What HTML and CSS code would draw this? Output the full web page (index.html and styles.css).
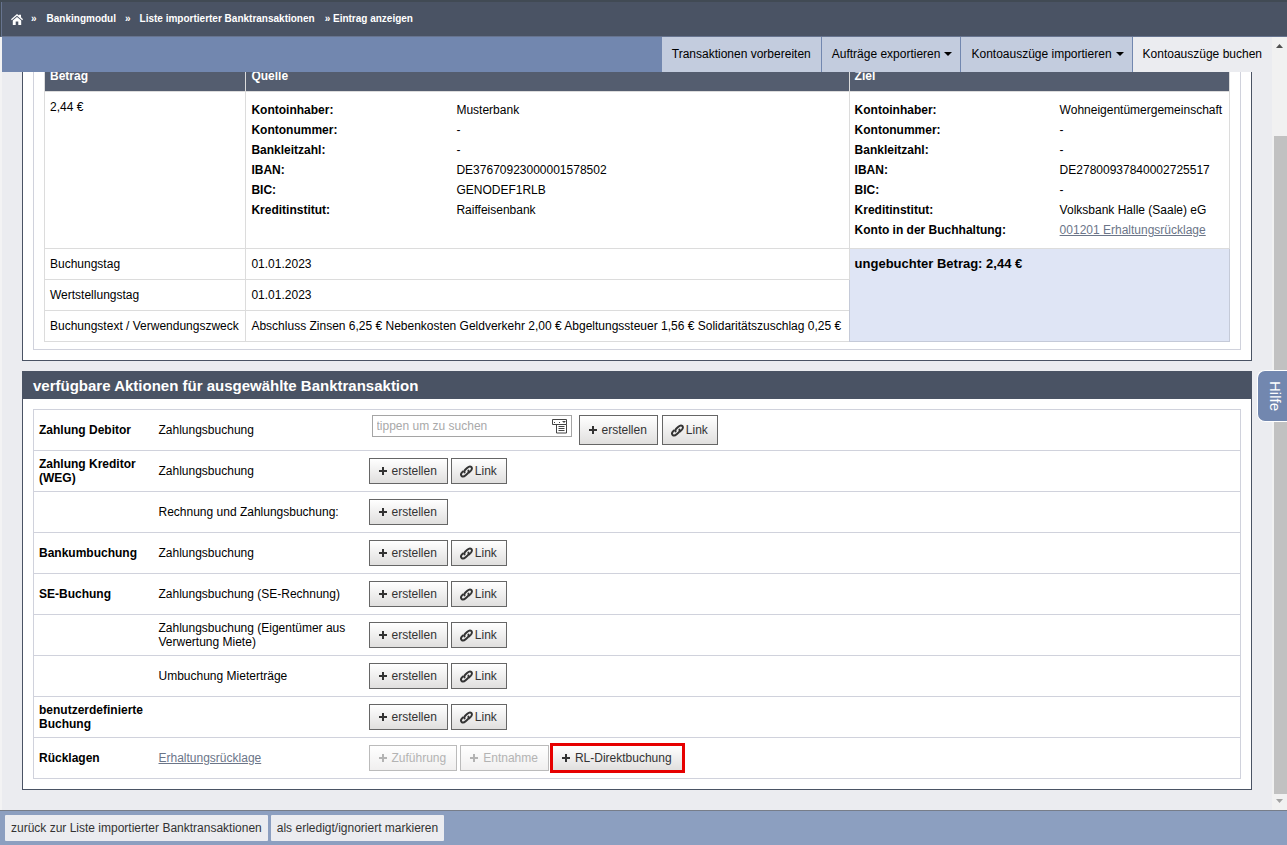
FILE: index.html
```html
<!DOCTYPE html>
<html lang="de">
<head>
<meta charset="utf-8">
<title>Eintrag anzeigen</title>
<link rel="stylesheet" href="styles.css">
</head>
<body>
<svg class="sprite" aria-hidden="true">
  <symbol id="plus" viewBox="0 0 8 8"><path d="M3 0h2v3h3v2H5v3H3V5H0V3h3z" fill="currentColor"/></symbol>
  <symbol id="chain" viewBox="0 0 12 12"><g fill="none" stroke="currentColor" stroke-width="1.800" stroke-linecap="round"><path d="M4.200 6.800C3.800 5.800 4.200 5 5 4.200L6.800 2.500C8 1.400 9.600 1 10.500 1.900C11.400 2.800 11 4.300 9.900 5.400L8.300 6.900"/><path d="M7.800 5.200C8.200 6.200 7.800 7 7 7.800L5.200 9.500C4 10.600 2.400 11 1.500 10.100C.6 9.200 1 7.700 2.100 6.600L2.700 6"/></g></symbol>
</svg>
<header class="topbar">
  <nav class="crumbs" aria-label="Pfad">
    <a class="home" href="#" aria-label="Startseite"><svg width="12" height="11" viewBox="0 0 12 11"><path d="M6 0l2 1.600V.800h2v2.500l2 2-.8.900L6 1.800.8 6.200 0 5.300z M6 2.900l4.200 3.700V11H7.300V7.500H4.700V11H1.800V6.600z" fill="#fff"/></svg></a>
    <span class="sep">»</span><a href="#">Bankingmodul</a>
    <span class="sep">»</span><a href="#">Liste importierter Banktransaktionen</a>
    <span class="last">» Eintrag anzeigen</span>
  </nav>
</header>
<div class="body">
  <div class="page">
    <nav class="tabs">
      <a href="#">Transaktionen vorbereiten</a>
      <a class="drop" href="#">Aufträge exportieren <i class="caret"></i></a>
      <a class="drop" href="#">Kontoauszüge importieren <i class="caret"></i></a>
      <a class="active" href="#">Kontoauszüge buchen</a>
    </nav>
    <main class="content">
      <section class="panel scrolled">
        <div class="box padded">
          <table class="transaction">
            <colgroup><col class="c-amount"><col class="c-source"><col class="c-target"></colgroup>
            <thead><tr><th>Betrag</th><th>Quelle</th><th>Ziel</th></tr></thead>
            <tbody>
              <tr>
                <td>2,44 €</td>
                <td><dl>
                  <dt>Kontoinhaber:</dt><dd>Musterbank</dd>
                  <dt>Kontonummer:</dt><dd>-</dd>
                  <dt>Bankleitzahl:</dt><dd>-</dd>
                  <dt>IBAN:</dt><dd>DE37670923000001578502</dd>
                  <dt>BIC:</dt><dd>GENODEF1RLB</dd>
                  <dt>Kreditinstitut:</dt><dd>Raiffeisenbank</dd>
                </dl></td>
                <td><dl>
                  <dt>Kontoinhaber:</dt><dd>Wohneigentümergemeinschaft</dd>
                  <dt>Kontonummer:</dt><dd>-</dd>
                  <dt>Bankleitzahl:</dt><dd>-</dd>
                  <dt>IBAN:</dt><dd>DE27800937840002725517</dd>
                  <dt>BIC:</dt><dd>-</dd>
                  <dt>Kreditinstitut:</dt><dd>Volksbank Halle (Saale) eG</dd>
                  <dt>Konto in der Buchhaltung:</dt><dd><a class="link" href="#">001201 Erhaltungsrücklage</a></dd>
                </dl></td>
              </tr>
              <tr><td>Buchungstag</td><td>01.01.2023</td><td class="open" rowspan="3">ungebuchter Betrag: 2,44 €</td></tr>
              <tr><td>Wertstellungstag</td><td>01.01.2023</td></tr>
              <tr><td>Buchungstext / Verwendungszweck</td><td>Abschluss Zinsen 6,25 € Nebenkosten Geldverkehr 2,00 € Abgeltungssteuer 1,56 € Solidaritätszuschlag 0,25 €</td></tr>
            </tbody>
          </table>
        </div>
      </section>
      <section class="panel">
        <h2>verfügbare Aktionen für ausgewählte Banktransaktion</h2>
        <table class="actions">
          <colgroup><col class="c-kind"><col class="c-name"><col></colgroup>
          <tbody>
            <tr><th scope="row">Zahlung Debitor</th><td>Zahlungsbuchung</td><td>
              <div class="buttons tall">
                <div class="search"><input type="text" placeholder="tippen um zu suchen" aria-label="Debitor suchen"><button type="button" aria-label="Liste öffnen"><svg width="16" height="15" viewBox="0 0 16 15"><g fill="none" stroke="#444"><path d="M.5.500h14v5H.5z"/><path d="M4.500 5.500v8.500h10V5.500"/><path d="M2 3.500h1M7 3.500h1M6.500 7.500h6M6.500 9.500h6M6.500 11.500h6"/></g><path d="M10 2h4l-2 2z" fill="#444"/></svg></button></div>
                <button class="btn" type="button"><svg class="plus"><use href="#plus"/></svg>erstellen</button>
                <button class="btn chain" type="button"><svg><use href="#chain"/></svg>Link</button>
              </div></td></tr>
            <tr><th scope="row">Zahlung Kreditor (WEG)</th><td>Zahlungsbuchung</td><td><div class="buttons">
                <button class="btn" type="button"><svg class="plus"><use href="#plus"/></svg>erstellen</button>
                <button class="btn chain" type="button"><svg><use href="#chain"/></svg>Link</button></div></td></tr>
            <tr><th></th><td>Rechnung und Zahlungsbuchung:</td><td><div class="buttons">
                <button class="btn" type="button"><svg class="plus"><use href="#plus"/></svg>erstellen</button></div></td></tr>
            <tr><th scope="row">Bankumbuchung</th><td>Zahlungsbuchung</td><td><div class="buttons">
                <button class="btn" type="button"><svg class="plus"><use href="#plus"/></svg>erstellen</button>
                <button class="btn chain" type="button"><svg><use href="#chain"/></svg>Link</button></div></td></tr>
            <tr><th scope="row">SE-Buchung</th><td>Zahlungsbuchung (SE-Rechnung)</td><td><div class="buttons">
                <button class="btn" type="button"><svg class="plus"><use href="#plus"/></svg>erstellen</button>
                <button class="btn chain" type="button"><svg><use href="#chain"/></svg>Link</button></div></td></tr>
            <tr><th></th><td>Zahlungsbuchung (Eigentümer aus Verwertung Miete)</td><td><div class="buttons">
                <button class="btn" type="button"><svg class="plus"><use href="#plus"/></svg>erstellen</button>
                <button class="btn chain" type="button"><svg><use href="#chain"/></svg>Link</button></div></td></tr>
            <tr><th></th><td>Umbuchung Mieterträge</td><td><div class="buttons">
                <button class="btn" type="button"><svg class="plus"><use href="#plus"/></svg>erstellen</button>
                <button class="btn chain" type="button"><svg><use href="#chain"/></svg>Link</button></div></td></tr>
            <tr><th scope="row">benutzerdefinierte Buchung</th><td></td><td><div class="buttons">
                <button class="btn" type="button"><svg class="plus"><use href="#plus"/></svg>erstellen</button>
                <button class="btn chain" type="button"><svg><use href="#chain"/></svg>Link</button></div></td></tr>
            <tr><th scope="row">Rücklagen</th><td><a class="link" href="#">Erhaltungsrücklage</a></td><td><div class="buttons">
                <button class="btn" type="button" disabled><svg class="plus"><use href="#plus"/></svg>Zuführung</button>
                <button class="btn" type="button" disabled><svg class="plus"><use href="#plus"/></svg>Entnahme</button>
                <button class="btn marked" type="button"><svg class="plus"><use href="#plus"/></svg>RL-Direktbuchung</button></div></td></tr>
          </tbody>
        </table>
      </section>
    </main>
  </div>
  <div class="scrollbar" aria-hidden="true">
    <svg width="7" height="4" viewBox="0 0 7 4"><path d="M3.500 0L7 4H0z" fill="#505050"/></svg>
    <div class="track"><div class="thumb"></div></div>
    <svg width="7" height="4" viewBox="0 0 7 4"><path d="M0 0h7L3.500 4z" fill="#a3a3a3"/></svg>
  </div>
</div>
<footer class="footer">
  <button type="button">zurück zur Liste importierter Banktransaktionen</button>
  <button type="button">als erledigt/ignoriert markieren</button>
</footer>
<button class="help" type="button">Hilfe</button>
</body>
</html>
```

FILE: styles.css
```css
* { box-sizing: border-box; }

body {
  margin: 0;
  height: 100vh;
  display: flex;
  flex-direction: column;
  overflow: hidden;
  background: #ebecf0;
  color: #000;
  font: 12px/14px "Liberation Sans", Arial, sans-serif;
}

button, input { font: inherit; color: inherit; margin: 0; }
.sprite { display: none; }

.topbar {
  flex: none;
  height: 37px;
  padding: 0 10px;
  background: #4a5364;
  border-top: 2px solid #414a54;
  border-bottom: 1px solid #67748f;
  border-left: 1px solid #414a54;
  box-shadow: inset 1px 0 #67748f;
}
.crumbs {
  display: flex;
  align-items: center;
  height: 100%;
  color: #fff;
  font-size: 10px;
  font-weight: bold;
}
.crumbs a { color: #fff; text-decoration: none; }
.home { display: flex; margin-right: 8px; }
.sep { margin-right: 9px; }
.crumbs a + .sep { margin-left: 9px; }
.crumbs .home + .sep { margin-left: 0; margin-right: 10px; }
.last { margin-left: 10px; }

.body { flex: 1; display: flex; min-height: 0; }
.page {
  flex: 1;
  min-width: 0;
  display: flex;
  flex-direction: column;
  border-left: 2px solid #f3f3f4;
}

.tabs {
  flex: none;
  display: flex;
  justify-content: flex-end;
  gap: 1px;
  background: #7287af;
}
.tabs a {
  display: flex;
  align-items: center;
  height: 35px;
  padding: 0 10px 2px;
  background: #c3ccde;
  color: #000;
  text-decoration: none;
}
.tabs .drop { padding-right: 8px; }
.tabs .active { background: #ebecf0; }
.caret {
  margin-left: 4px;
  border: 4px solid transparent;
  border-top-color: #000;
  border-bottom: 0;
}

.content { flex: 1; min-height: 0; overflow: hidden; padding: 0 20px; }
.panel {
  margin-bottom: 10px;
  padding: 10px;
  border: 1px solid #4a5364;
  background: #fff;
}
.scrolled { margin-top: -34px; }
.box { border: 1px solid #d0d2dc; }
.padded { padding: 10px 10px 7px; }
.panel h2 {
  margin: -10px -10px 10px;
  padding: 5px 10px;
  background: #4a5364;
  color: #fff;
  font-size: 15px;
  line-height: 17px;
}

table { width: 100%; border-collapse: collapse; table-layout: fixed; }
th { text-align: left; }

.c-amount { width: 17%; }
.c-source { width: 50.9%; }
.c-target { width: 32.1%; }
.transaction th, .transaction td {
  padding: 8px 5px;
  border: 1px solid #dcdcdc;
  vertical-align: top;
}
.transaction th { background: #545d6f; color: #fff; }
.transaction .open {
  background: #dfe5f5;
  border-color: #c5cad8;
  font-size: 13px;
  font-weight: bold;
}
dl { display: grid; grid-template-columns: 205px 1fr; margin: 0; line-height: 20px; }
dt { font-weight: bold; }
dd { margin: 0; }
.link { color: #6b7588; text-decoration: underline; }

.c-kind { width: 120px; }
.c-name { width: 210px; }
.actions { border: 1px solid #d0d2dc; }
.actions th, .actions td { height: 41px; padding: 0 5px; border-top: 1px solid #d0d2dc; }

.buttons { display: flex; gap: 3px; }
.btn {
  display: flex;
  align-items: center;
  gap: 5px;
  height: 26px;
  padding: 0 10px 0 9px;
  border: 1px solid #666;
  border-radius: 0;
  background: linear-gradient(#fff, #e0dfde);
  color: #333;
}
.btn svg { width: 13px; height: 13px; }
.btn .plus { width: 8px; height: 8px; }
.btn.chain { gap: 2px; padding: 0 9px 0 8px; }
.btn:disabled { border-color: #bbb; background: linear-gradient(#fff, #f0efef); color: #b3b3b3; }
.marked { outline: 3px solid #e60000; outline-offset: -1px; }

.tall { gap: 4px; padding-left: 3px; }
.tall .btn { height: 30px; }
.search {
  display: flex;
  align-items: center;
  width: 200px;
  height: 22px;
  margin-right: 3px;
  padding: 0 3px 0 4px;
  border: 1px solid #a5a5a5;
}
.search input { flex: 1; min-width: 0; padding: 0; border: 0; outline: 0; background: none; }
.search input::placeholder { color: #a9a9a9; opacity: 1; }
.search button { display: flex; padding: 0; border: 0; background: none; }

.scrollbar {
  flex: none;
  display: flex;
  flex-direction: column;
  align-items: center;
  width: 15px;
  padding: 7px 0;
  background: #f1f1f1;
}
.track { flex: 1; align-self: stretch; padding: 88px 0 5px 2px; }
.thumb { height: 100%; background: #c1c1c1; }

.footer {
  flex: none;
  display: flex;
  gap: 3px;
  padding: 4px 5px;
  border-top: 1px solid #777d89;
  background: #8c9fc0;
}
.footer button {
  height: 26px;
  padding: 0 6px;
  border: 0;
  border-radius: 1px;
  background: #ebecf0;
  color: #333;
}

.help {
  position: absolute;
  top: 370px;
  right: 0;
  width: 30px;
  height: 52px;
  padding: 0 0 0 4px;
  border: 1px solid #fff;
  border-right: 0;
  border-radius: 8px 0 0 8px;
  background: #7287af;
  color: #fff;
  font-size: 15px;
  writing-mode: vertical-rl;
}
```
